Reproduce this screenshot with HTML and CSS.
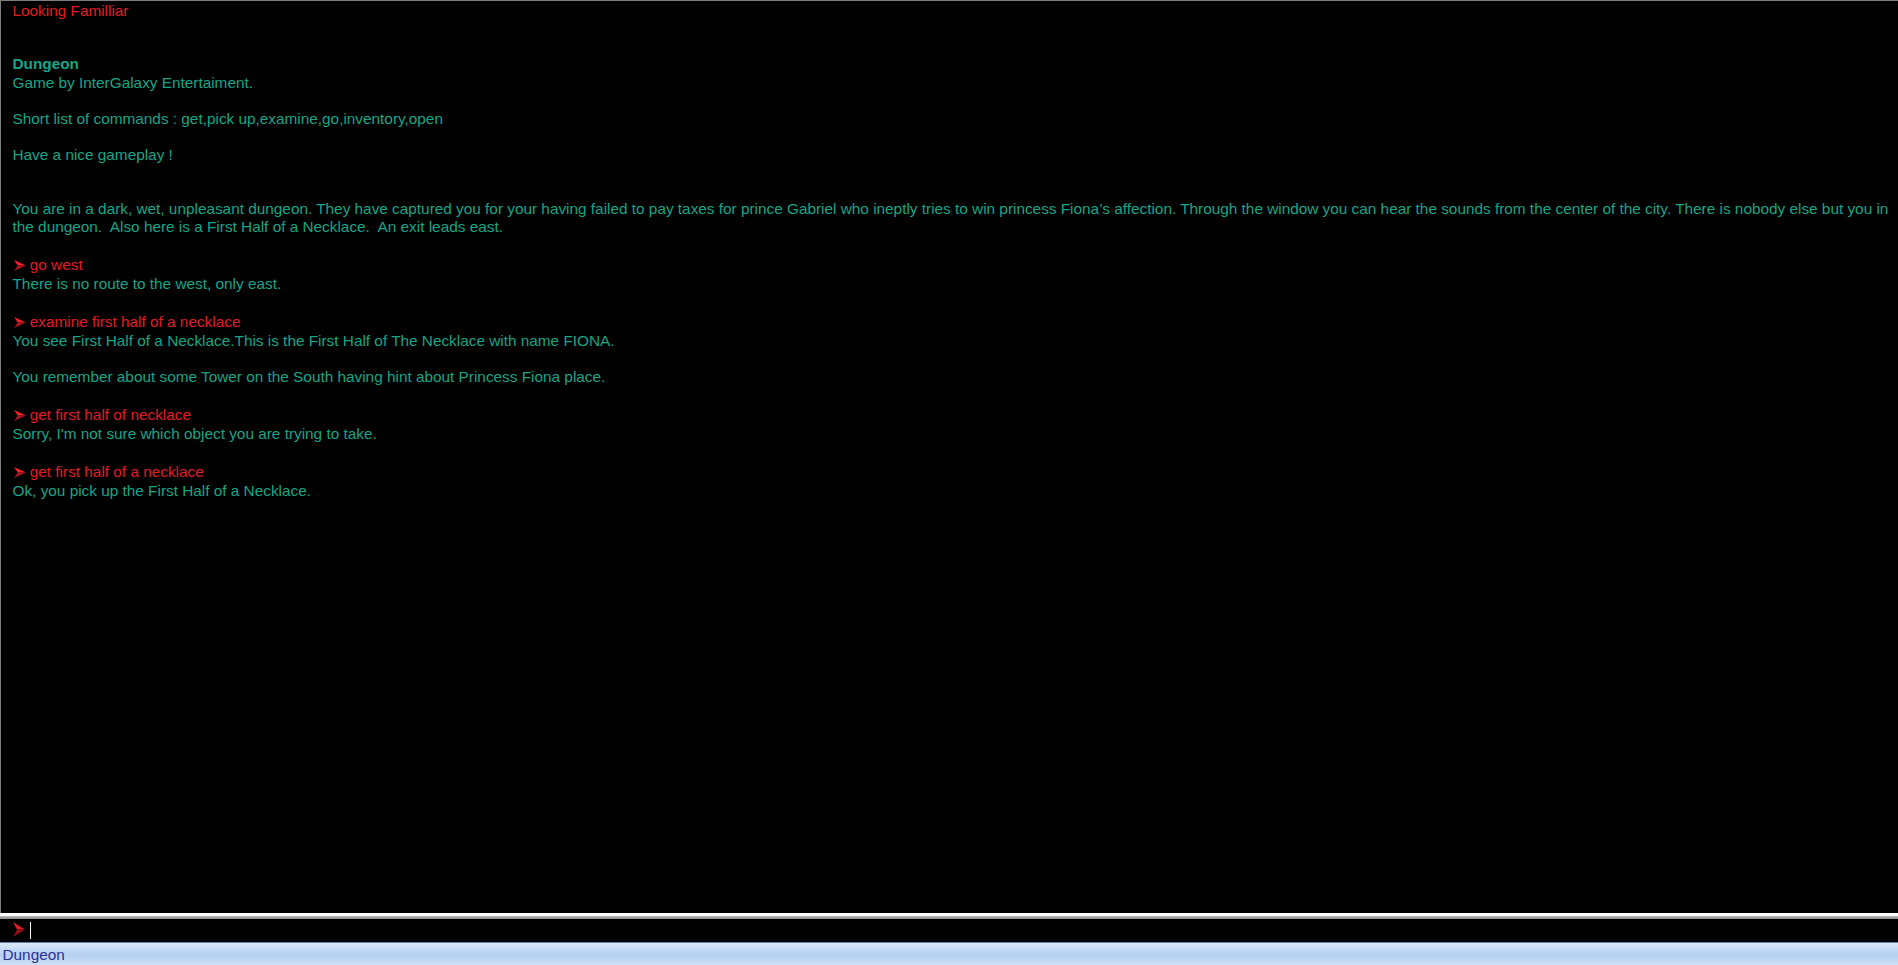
FILE: index.html
```html
<!DOCTYPE html>
<html>
<head>
<meta charset="utf-8">
<title>Dungeon</title>
<link rel="stylesheet" href="styles.css">
</head>
<body>
<div class="app">
  <div class="output">
    <div class="line red">Looking Familliar</div>
    <div class="gap-title"></div>
    <div class="line bold">Dungeon</div>
    <div class="line sub">Game by InterGalaxy Entertaiment.</div>
    <div class="blank"></div>
    <div class="line">Short list of commands : get,pick up,examine,go,inventory,open</div>
    <div class="blank"></div>
    <div class="line">Have a nice gameplay !</div>
    <div class="blank"></div>
    <div class="blank"></div>
    <div class="line">You are in a dark, wet, unpleasant dungeon. They have captured you for your having failed to pay taxes for prince Gabriel who ineptly tries to win princess Fiona’s affection. Through the window you can hear the sounds from the center of the city. There is nobody else but you in the dungeon.  Also here is a First Half of a Necklace.  An exit leads east.</div>
    <div class="blank"></div>
    <div class="line cmd"><svg class="arrow" viewBox="0 0 12 11" width="12" height="11"><polygon points="0,0 12,5.5 3.8,5.5" fill="#f2232a"/><polygon points="3.8,5.5 12,5.5 0,11" fill="#a8141a"/></svg> go west</div>
    <div class="line">There is no route to the west, only east.</div>
    <div class="blank"></div>
    <div class="line cmd"><svg class="arrow" viewBox="0 0 12 11" width="12" height="11"><polygon points="0,0 12,5.5 3.8,5.5" fill="#f2232a"/><polygon points="3.8,5.5 12,5.5 0,11" fill="#a8141a"/></svg> examine first half of a necklace</div>
    <div class="line">You see First Half of a Necklace.This is the First Half of The Necklace with name FIONA.</div>
    <div class="blank"></div>
    <div class="line">You remember about some Tower on the South having hint about Princess Fiona place.</div>
    <div class="blank"></div>
    <div class="line cmd"><svg class="arrow" viewBox="0 0 12 11" width="12" height="11"><polygon points="0,0 12,5.5 3.8,5.5" fill="#f2232a"/><polygon points="3.8,5.5 12,5.5 0,11" fill="#a8141a"/></svg> get first half of necklace</div>
    <div class="line">Sorry, I'm not sure which object you are trying to take.</div>
    <div class="blank"></div>
    <div class="line cmd"><svg class="arrow" viewBox="0 0 12 11" width="12" height="11"><polygon points="0,0 12,5.5 3.8,5.5" fill="#f2232a"/><polygon points="3.8,5.5 12,5.5 0,11" fill="#a8141a"/></svg> get first half of a necklace</div>
    <div class="line">Ok, you pick up the First Half of a Necklace.</div>
  </div>
  <div class="splitter"></div>
  <div class="input">
    <svg class="prompt" viewBox="0 0 12 15" width="12" height="15"><polygon points="0,0 12,7.5 4,7.5" fill="#d8222a"/><polygon points="4,7.5 12,7.5 0,15" fill="#8e1016"/></svg>
    <span class="caret"></span>
  </div>
  <div class="status">Dungeon</div>
</div>
</body>
</html>
```
FILE: styles.css
```css
html, body {
  margin: 0;
  padding: 0;
  background: #000;
}
body {
  font-family: "Liberation Sans", Arial, sans-serif;
  font-size: 15.35px;
}
.app {
  display: flex;
  flex-direction: column;
  height: 965px;
  overflow: hidden;
}
.output {
  height: 913px;
  box-sizing: border-box;
  border-left: 1px solid #7d7d7d;
  border-top: 1px solid #7d7d7d;
  padding: 1px 0 0 11.5px;
  background: #000;
  color: #17a587;
}
.line {
  line-height: 18px;
  white-space: pre-wrap;
}
.red, .cmd {
  color: #e21c24;
}
.bold {
  font-weight: bold;
}
.gap-title {
  height: 35px;
}
.sub {
  margin-top: 1px;
}
.blank {
  height: 18px;
}
.cmd {
  margin-top: 2px;
  margin-bottom: 1px;
}
.arrow {
  display: inline-block;
  vertical-align: -1px;
  margin-left: 1px;
}
.splitter {
  height: 6px;
  background: linear-gradient(#ffffff 0, #ffffff 2.5px, #c4c4c4 2.5px, #8a8a8a 6px);
}
.input {
  height: 23px;
  background: #000;
  display: flex;
  align-items: center;
  padding-left: 12.5px;
  gap: 5px;
}
.prompt {
  display: block;
  margin-top: -2px;
}
.caret {
  width: 1px;
  height: 17px;
  background: #fff;
  margin-top: -1px;
}
.status {
  height: 20px;
  padding-top: 2px;
  border-top: 1px solid #5a80b4;
  background: linear-gradient(#dde9f9 0, #c3daf3 30%, #b5d0f0 55%, #cde0f6 100%);
  color: #2d2f96;
  padding-left: 2.5px;
  line-height: 20px;
  box-sizing: content-box;
}
```
